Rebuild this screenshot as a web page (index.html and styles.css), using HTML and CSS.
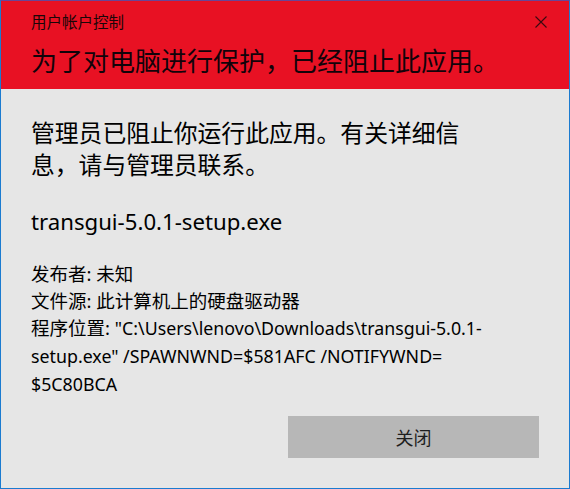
FILE: index.html
```html
<!DOCTYPE html>
<html lang="zh-CN">
<head>
<meta charset="utf-8">
<title>用户帐户控制</title>
<link rel="stylesheet" href="styles.css">
</head>
<body>
<div class="window">
  <header class="header">
    <div class="title-row">
      <span class="title">用户帐户控制</span>
      <button class="close" aria-label="关闭">
        <svg width="12" height="12" viewBox="0 0 12 12"><path d="M0.5 0.5 L11.5 11.5 M11.5 0.5 L0.5 11.5" stroke="#3a0a10" stroke-width="1.1" fill="none"/></svg>
      </button>
    </div>
    <h1 class="headline">为了对电脑进行保护，已经阻止此应用。</h1>
  </header>
  <main class="content">
    <p class="message">管理员已阻止你运行此应用。有关详细信<br>息，请与管理员联系。</p>
    <p class="filename">transgui-5.0.1-setup.exe</p>
    <div class="details">
      <div>发布者: 未知</div>
      <div>文件源: 此计算机上的硬盘驱动器</div>
      <div>程序位置: <span class="lat">"C:\Users\lenovo\Downloads\transgui-5.0.1-<br>setup.exe" /SPAWNWND=$581AFC /NOTIFYWND=<br>$5C80BCA</span></div>
    </div>
  </main>
  <footer class="footer">
    <button class="btn">关闭</button>
  </footer>
</div>
</body>
</html>
```

FILE: styles.css
```css
* { box-sizing: border-box; }
html, body { margin: 0; padding: 0; }
body {
  width: 570px;
  height: 489px;
  overflow: hidden;
  font-family: "Noto Sans", "Noto Sans CJK SC", sans-serif;
  color: #000;
  background: #e6e6e6;
}
.window {
  width: 570px;
  height: 489px;
  border: 1px solid #1b7bd0;
  border-top-color: #6a4596;
  background: #e6e6e6;
  display: flex;
  flex-direction: column;
}
.header {
  background: #e81123;
  height: 88px;
  padding: 9px 0 0 30px;
}
.title-row {
  display: flex;
  justify-content: space-between;
  align-items: center;
  height: 24px;
}
.title {
  font-size: 15.5px;
  line-height: 24px;
  color: #1a0608;
}
.close {
  border: 0;
  background: transparent;
  padding: 0;
  margin-right: 22px;
  width: 12px;
  height: 12px;
  display: flex;
}
.headline {
  margin: 9px 0 0;
  font-weight: normal;
  font-size: 26px;
  line-height: 36px;
  color: #12030a;
}
.content {
  padding: 28px 30px 0;
  flex: 1;
}
.message {
  margin: 0;
  font-size: 23.8px;
  line-height: 32px;
}
.filename {
  margin: 27px 0 0;
  font-size: 22.2px;
  line-height: 28px;
}
.details {
  margin-top: 24px;
  font-size: 18.5px;
  line-height: 27px;
}
.lat {
  font-size: 17.8px;
}
.footer {
  display: flex;
  justify-content: flex-end;
  padding: 0 30px 30px;
}
.btn {
  width: 251px;
  height: 42px;
  border: 0;
  background: #b7b7b7;
  font-family: "Noto Sans CJK SC", sans-serif;
  font-size: 18px;
  color: #1e1e1e;
}
```
